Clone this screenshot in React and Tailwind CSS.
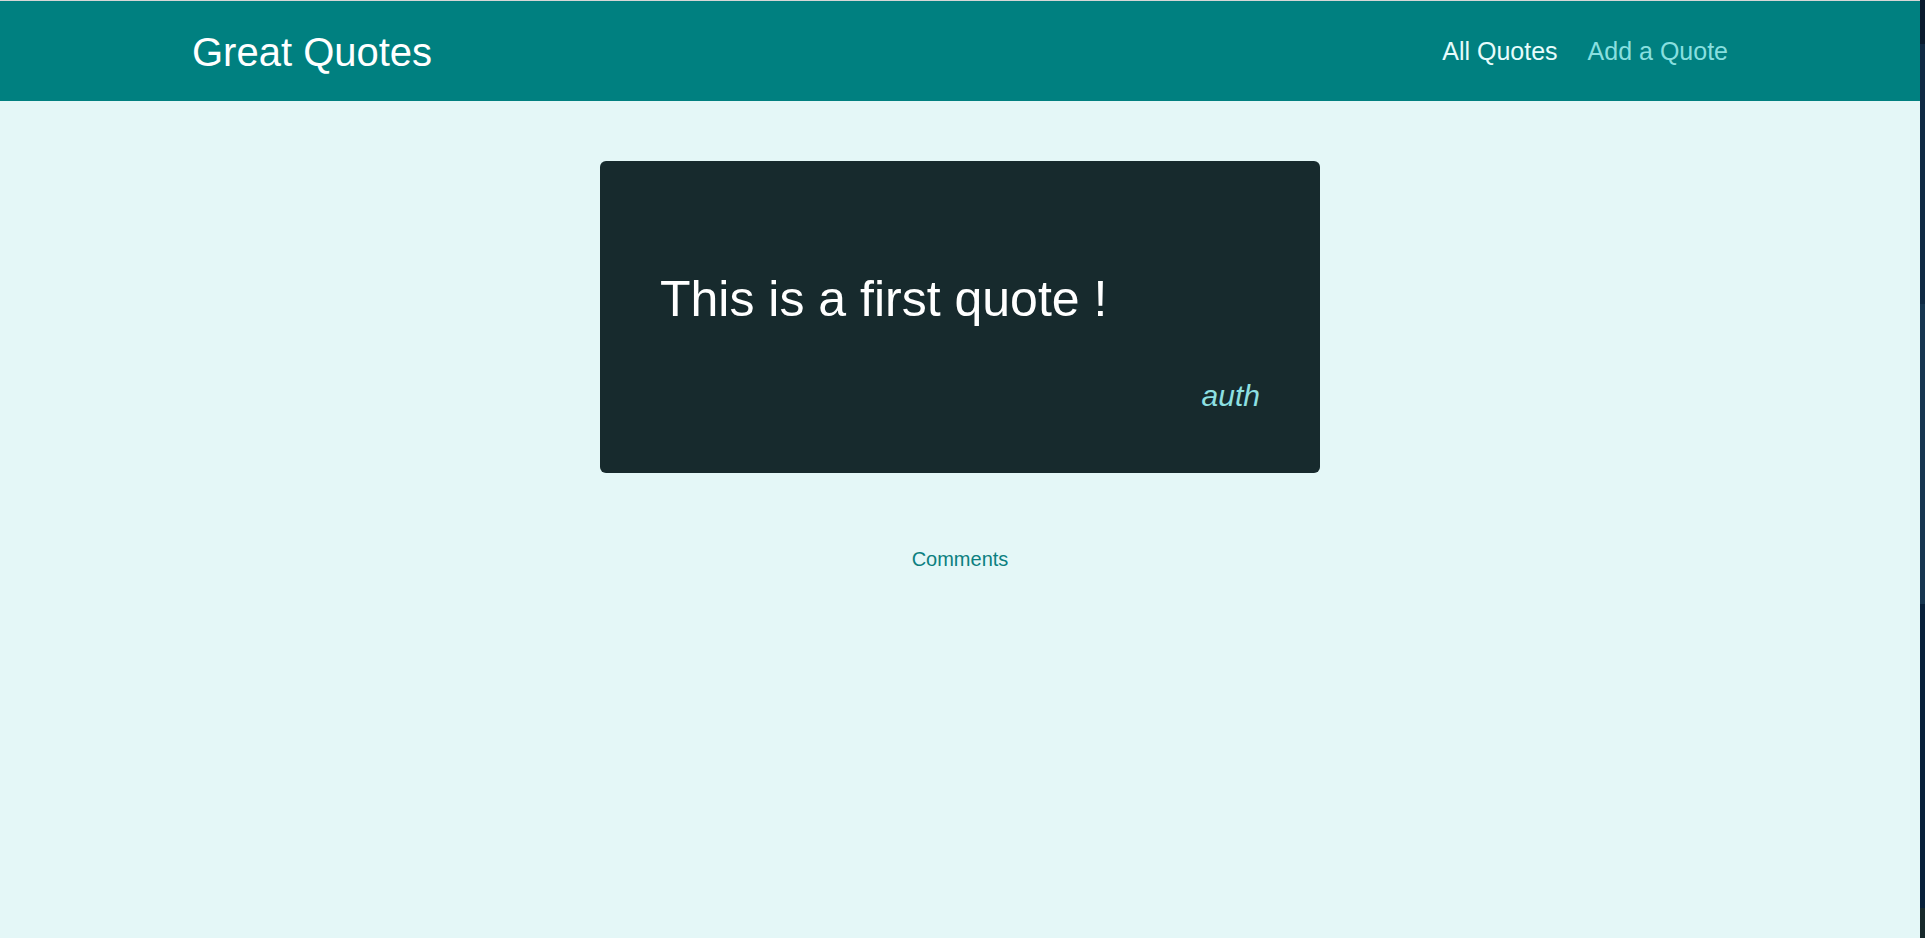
export default function App() {
  return (
    <div className="flex h-[938px] w-full overflow-hidden" style={{ fontFamily: '"Liberation Sans", Arial, sans-serif' }}>
      <div className="flex flex-1 flex-col bg-[#e4f7f7]">
        <div className="h-px bg-[#d6d6d6]" />
        <header className="flex h-[100px] items-center justify-between bg-[#008080] pl-[192px] pr-[192px] pt-[2px]">
          <div className="text-[40px] leading-none text-white">Great Quotes</div>
          <nav>
            <ul className="flex gap-[30px]">
              <li className="text-[25px] text-[#e6fcfc]">All Quotes</li>
              <li className="text-[25px] text-[#88dfdf]">Add a Quote</li>
            </ul>
          </nav>
        </header>
        <main className="flex flex-col items-center">
          <figure className="mt-[60px] w-[720px] rounded-[6px] bg-[#172a2d] px-[60px] pb-[60px] pt-[109px]">
            <blockquote className="text-[50px] leading-[58px] text-white">This is a first quote !</blockquote>
            <figcaption className="mt-[51px] text-right text-[30px] italic leading-[34px] text-[#8ee0e2]">auth</figcaption>
          </figure>
          <div className="mt-[74px] text-[20px] leading-[24px] text-[#0b7f80]">Comments</div>
        </main>
      </div>
      <div className="flex w-[5px] flex-col bg-[#0c2036]">
        <div className="h-[44px] bg-[#0a1b2e]" />
        <div className="h-[260px] bg-[#0f2a44]" />
        <div className="h-[300px] bg-[#163650]" />
        <div className="flex-1 bg-[#07203a]" />
        <div className="h-[30px] bg-[#17292b]" />
      </div>
    </div>
  );
}
